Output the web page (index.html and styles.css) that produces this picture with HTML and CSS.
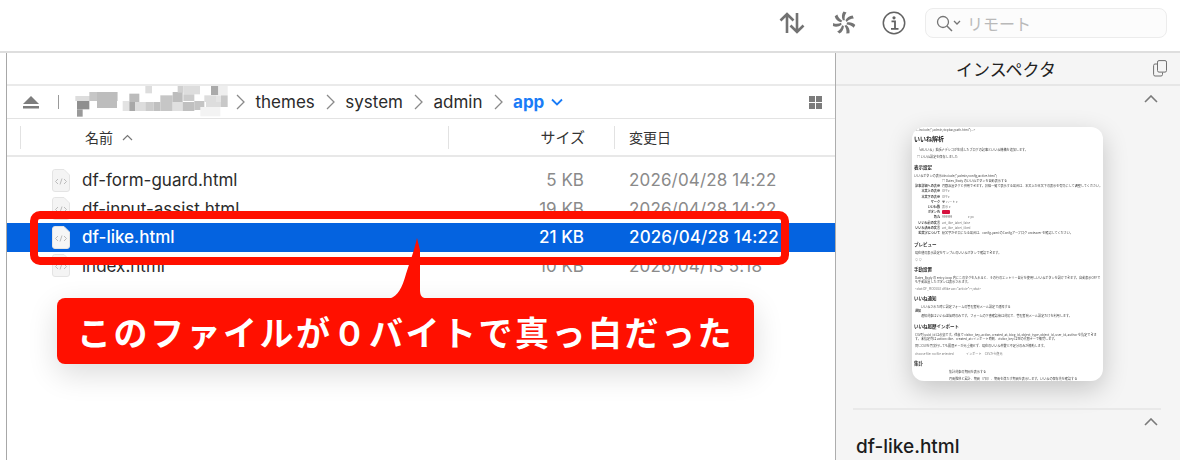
FILE: index.html
```html
<!DOCTYPE html>
<html lang="ja">
<head>
<meta charset="utf-8">
<title>Finder</title>
<link rel="stylesheet" href="styles.css">
</head>
<body>
<div class="window">
  <header class="toolbar">
    <svg class="tool tool-sort" width="26" height="22" viewBox="0 0 26 22"><path d="M8 21V2M1.500 8.500 8 2l6.500 6.500M18 1v19M11.500 13.500 18 20l6.500-6.500" fill="none" stroke="#727272" stroke-width="2.600"/></svg>
    <svg class="tool tool-wheel" width="24" height="24" viewBox="-12 -12 24 24"><g fill="#747474"><path id="b" d="M-1.200-2.800C-2.500-5.500-2.500-9-.5-11.500L2.500-10.500C.8-8.500 .3-5.500 .8-2.800Z"/><use href="#b" transform="rotate(51.400)"/><use href="#b" transform="rotate(102.900)"/><use href="#b" transform="rotate(154.300)"/><use href="#b" transform="rotate(205.700)"/><use href="#b" transform="rotate(257.100)"/><use href="#b" transform="rotate(308.600)"/></g></svg>
    <svg class="tool tool-info" width="24" height="24" viewBox="0 0 24 24"><circle cx="12" cy="12" r="10.700" fill="none" stroke="#636363" stroke-width="1.500"/><circle cx="12" cy="6.800" r="1.600" fill="#636363"/><path d="M9.500 10.300H13v7M9 17.800h7.500" fill="none" stroke="#636363" stroke-width="1.800"/></svg>
    <div class="search">
      <svg width="27" height="17" viewBox="0 0 27 17"><circle cx="7" cy="7" r="5.500" fill="none" stroke="#757575" stroke-width="1.300"/><path d="m11 11 5 5" stroke="#757575" stroke-width="1.500"/><path d="m18 6 3 3 3-3" fill="none" stroke="#757575" stroke-width="1.300"/></svg>
      <span class="search-text">リモート</span>
    </div>
  </header>
  <main class="main">
    <section class="files">
      <div class="files-top"></div>
      <div class="pathbar">
        <svg class="eject" width="16" height="13" viewBox="0 0 16 13"><path d="M8 0 16 8H0Z" fill="#7d7d7d"/><rect y="10" width="16" height="2.500" fill="#7d7d7d"/></svg>
        <span class="path-sep"></span>
        <svg class="mosaic" width="165" height="40" viewBox="0 0 495 120">
          <rect x="13" y="42" width="45" height="15" fill="#ddd"/><rect x="55" y="30" width="85" height="27" fill="#c6c6c6"/><rect x="78" y="30" width="60" height="48" fill="#bdbdbd"/><rect x="18" y="57" width="37" height="25" fill="#8f8f8f"/><rect x="18" y="82" width="17" height="22" fill="#9a9a9a"/><rect x="155" y="57" width="20" height="30" fill="#e3e3e3"/><rect x="175" y="35" width="30" height="25" fill="#bbb"/><rect x="175" y="60" width="18" height="27" fill="#a8a8a8"/><rect x="193" y="60" width="30" height="27" fill="#ddd"/><rect x="223" y="12" width="20" height="22" fill="#ddd"/><rect x="223" y="60" width="25" height="27" fill="#ccc"/><rect x="248" y="60" width="20" height="27" fill="#c0c0c0"/><rect x="268" y="40" width="37" height="47" fill="#c6c6c6"/><rect x="305" y="30" width="30" height="30" fill="#bdbdbd"/><rect x="305" y="60" width="30" height="27" fill="#e0e0e0"/><rect x="320" y="12" width="17" height="20" fill="#d0d0d0"/><rect x="337" y="12" width="50" height="25" fill="#ddd"/><rect x="337" y="37" width="33" height="20" fill="#ccc"/><rect x="335" y="60" width="35" height="27" fill="#c0c0c0"/><rect x="370" y="57" width="30" height="27" fill="#c4c4c4"/><rect x="400" y="40" width="35" height="20" fill="#ddd"/><rect x="420" y="12" width="22" height="27" fill="#aaa"/><rect x="442" y="12" width="28" height="27" fill="#eee"/><rect x="435" y="40" width="15" height="30" fill="#e4e4e4"/><rect x="450" y="40" width="20" height="35" fill="#c8c8c8"/><rect x="388" y="75" width="60" height="28" fill="#f3f3f3"/><rect x="405" y="60" width="45" height="15" fill="#ddd"/>
        </svg>
        <svg class="crumb-arrow" width="9" height="16" viewBox="0 0 9 16"><path d="m1 1 7 7-7 7" fill="none" stroke="#8a8a8a" stroke-width="1.300"/></svg>
        <span class="crumb">themes</span>
        <svg class="crumb-arrow" width="9" height="16" viewBox="0 0 9 16"><path d="m1 1 7 7-7 7" fill="none" stroke="#8a8a8a" stroke-width="1.300"/></svg>
        <span class="crumb">system</span>
        <svg class="crumb-arrow" width="9" height="16" viewBox="0 0 9 16"><path d="m1 1 7 7-7 7" fill="none" stroke="#8a8a8a" stroke-width="1.300"/></svg>
        <span class="crumb">admin</span>
        <svg class="crumb-arrow" width="9" height="16" viewBox="0 0 9 16"><path d="m1 1 7 7-7 7" fill="none" stroke="#8a8a8a" stroke-width="1.300"/></svg>
        <span class="crumb crumb-current">app</span>
        <svg class="crumb-down" width="12" height="8" viewBox="0 0 12 8"><path d="m1 1.500 5 5 5-5" fill="none" stroke="#1a7cf7" stroke-width="1.800"/></svg>
        <svg class="view-grid" width="13" height="13" viewBox="0 0 13 13"><g fill="#7c7c7c"><rect width="6" height="6"/><rect x="7" width="6" height="6"/><rect y="7" width="6" height="6"/><rect x="7" y="7" width="6" height="6"/></g></svg>
      </div>
      <div class="list-head">
        <div class="head-cell head-name">名前<svg width="11" height="7" viewBox="0 0 11 7"><path d="m1 6 4.500-4.500L10 6" fill="none" stroke="#777" stroke-width="1.200"/></svg></div>
        <div class="head-cell head-size">サイズ</div>
        <div class="head-cell head-date">変更日</div>
      </div>
      <div class="rows">
        <div class="row">
          <svg class="doc" width="18" height="23" viewBox="0 0 18 23"><path d="M2.500.5H12L17.500 6V20A2.500 2.500 0 0 1 15 22.500H3A2.500 2.500 0 0 1 .5 20V3A2.500 2.500 0 0 1 2.500.5Z" fill="#f4f4f4" stroke="#e4e4e4"/><path d="m6 10-2.500 2.500L6 15M12 10l2.500 2.500L12 15M10 9.500 8 15.500" fill="none" stroke="#b5b5b5" stroke-width=".9"/></svg>
          <span class="row-name">df-form-guard.html</span><span class="row-size">5 KB</span><span class="row-date">2026/04/28 14:22</span>
        </div>
        <div class="row">
          <svg class="doc" width="18" height="23" viewBox="0 0 18 23"><path d="M2.500.5H12L17.500 6V20A2.500 2.500 0 0 1 15 22.500H3A2.500 2.500 0 0 1 .5 20V3A2.500 2.500 0 0 1 2.500.5Z" fill="#f4f4f4" stroke="#e4e4e4"/><path d="m6 10-2.500 2.500L6 15M12 10l2.500 2.500L12 15M10 9.500 8 15.500" fill="none" stroke="#b5b5b5" stroke-width=".9"/></svg>
          <span class="row-name">df-input-assist.html</span><span class="row-size">19 KB</span><span class="row-date">2026/04/28 14:22</span>
        </div>
        <div class="row row-selected">
          <svg class="doc" width="18" height="23" viewBox="0 0 18 23"><path d="M2.500.5H12L17.500 6V20A2.500 2.500 0 0 1 15 22.500H3A2.500 2.500 0 0 1 .5 20V3A2.500 2.500 0 0 1 2.500.5Z" fill="#f6f6f6" stroke="#e4e4e4"/><path d="m6 10-2.500 2.500L6 15M12 10l2.500 2.500L12 15M10 9.500 8 15.500" fill="none" stroke="#b5b5b5" stroke-width=".9"/></svg>
          <span class="row-name">df-like.html</span><span class="row-size">21 KB</span><span class="row-date">2026/04/28 14:22</span>
        </div>
        <div class="row">
          <svg class="doc" width="18" height="23" viewBox="0 0 18 23"><path d="M2.500.5H12L17.500 6V20A2.500 2.500 0 0 1 15 22.500H3A2.500 2.500 0 0 1 .5 20V3A2.500 2.500 0 0 1 2.500.5Z" fill="#f4f4f4" stroke="#e4e4e4"/><path d="m6 10-2.500 2.500L6 15M12 10l2.500 2.500L12 15M10 9.500 8 15.500" fill="none" stroke="#b5b5b5" stroke-width=".9"/></svg>
          <span class="row-name">index.html</span><span class="row-size">10 KB</span><span class="row-date">2026/04/13 5:18</span>
        </div>
      </div>
    </section>
    <aside class="inspector">
      <div class="insp-head">
        <span class="insp-title">インスペクタ</span>
        <svg class="insp-copy" width="14" height="17" viewBox="0 0 14 17"><rect x="4.500" y=".6" width="9" height="11.500" rx="1.500" fill="none" stroke="#707070"/><path d="M4.500 4H2A1.500 1.500 0 0 0 .6 5.500V14.500A1.500 1.500 0 0 0 2 16H8A1.500 1.500 0 0 0 9.500 14.500V12.500" fill="none" stroke="#707070"/></svg>
      </div>
      <div class="insp-chev-row">
        <svg width="14" height="8" viewBox="0 0 14 8"><path d="m1 7 6-6 6 6" fill="none" stroke="#7a7a7a" stroke-width="1.600"/></svg>
      </div>
      <div class="preview">
        <div class="doc-page">
          <p class="t-code">&lt;!--include("/admin/topbar/path.html")--&gt;</p>
          <h2 class="t-h1">いいね解析</h2>
          <p class="t-lead">「dfいいね」拡張ナデシコが生成したブログの記事といいね機構を追加します。</p>
          <p class="t-p t-gap">□ いいね設定を保存しました</p>
          <h3 class="t-h2">表示設定</h3>
          <div class="t-form">
            <span class="t-label t-plain">いいねボタンの表示</span><span class="t-value">#include("/admin/config/active.html")</span>
            <span class="t-label"></span><span class="t-value">□ Dates_Body のいいねボタンを自動表示する</span>
            <span class="t-label">記事詳細への表示</span><span class="t-value">月数設置タグと併用できます。投稿一覧で表示する場合は、本文上か本文下の表示を有効にして調整してください。</span>
            <span class="t-label">本文上の表示</span><span class="t-value t-muted">OFF ▾</span>
            <span class="t-label">本文下の表示</span><span class="t-value t-muted">OFF ▾</span>
            <span class="t-label">マーク</span><span class="t-value t-muted">♥ ハート ▾</span>
            <span class="t-label">いいね数</span><span class="t-value t-muted">表示 ▾</span>
            <span class="t-label">ボタン色</span><span class="t-swatch"></span>
            <span class="t-label">角丸</span><span class="t-value t-muted">999999　　　　　▾ px</span>
            <span class="t-label">いいね前の文言</span><span class="t-value t-muted">art_like_label_false</span>
            <span class="t-label">いいね済みの文言</span><span class="t-value t-muted">art_like_label_liked</span>
            <span class="t-label">絵文字について</span><span class="t-value">絵文字がゼロになる場合は、config.yaml のConfigアーブログ uroleaver を確認してください。</span>
          </div>
          <h3 class="t-h2">プレビュー</h3>
          <p class="t-p">現在値の表示設定をサンプルのいいねボタンで確認できます。</p>
          <p class="t-p">♡ ♡</p>
          <h3 class="t-h2">手動設置</h3>
          <p class="t-p">Dates_Body の entry-loop 内にこのタグを入れると、その行のエントリー自分を使用しいいねボタンを設けできます。自動表示OFFでも手動設置したボタンは表示されます。</p>
          <p class="t-code-line">&lt;dwt:DF_MODULE dflike var="article"&gt;&lt;/dwt&gt;</p>
          <h3 class="t-h2">いいね通知</h3>
          <p class="t-indent">いいねされた時に設定フォームの管理者宛メール設定で通知する</p>
          <p class="t-tight"><b>通知</b></p>
          <p class="t-indent">通知対象はいいね送信時のみです。フォームの下書確認後は対応で、管理者宛メール設定だけを利用します。</p>
          <h3 class="t-h2 t-h2-far">いいね履歴インポート</h3>
          <p class="t-p">CSV列 uuid_id は必須です。任意で visitor_key, action, created_at, blog_id, object_type, object_id, user_id, author を指定できます。未指定列は action=like、created_at=インポート時刻、visitor_key は空の代替キーで補完します。</p>
          <p class="t-p">同じCSVを再実行しても履歴キーが元重複せず、現在のいいね件数と不足分のみが補勧します。</p>
          <p class="t-code-line">choose file: no file selected　　　　インポート　CSVから復元</p>
          <h3 class="t-h2">集計</h3>
          <p class="t-center">集計対象の期間を表示する</p>
          <p class="t-center t-center-wide">月間推移と累計、期間（7日）、期間を満たす期間を表示します。いいねの保存先を確認する</p>
        </div>
      </div>
      <div class="insp-rule"></div>
      <div class="insp-chev-row insp-chev-row-2">
        <svg width="14" height="8" viewBox="0 0 14 8"><path d="m1 7 6-6 6 6" fill="none" stroke="#7a7a7a" stroke-width="1.600"/></svg>
      </div>
      <div class="insp-name">df-like.html</div>
    </aside>
  </main>

  <div class="mark-frame"></div>
  <div class="callout">
    <svg class="callout-tail" width="38" height="62" viewBox="0 0 38 62"><path d="M27 0C24 14 19 26 16 36 12 50 8 58 0 60.500V62H37V60.500C32 60 30 58 30 52V12Z" fill="#ff1000"/></svg>
    <span class="callout-text">このファイルが&#xFF10;バイトで真っ白だった</span>
  </div>
</div>
</body>
</html>
```

FILE: styles.css
```css
* { box-sizing: border-box; }
html, body { margin: 0; padding: 0; }
body {
  width: 1180px;
  height: 460px;
  overflow: hidden;
  background: #fff;
  color: #1e1e1e;
  font-family: Inter, "Noto Sans CJK JP", sans-serif;
}
.window { position: relative; width: 1180px; height: 460px; overflow: hidden; }

/* toolbar */
.toolbar {
  height: 53px;
  display: flex;
  align-items: center;
  padding: 0 13px 5px 0;
  justify-content: flex-end;
  background: #fff;
  border-bottom: 2px solid #dedede;
}
.tool { flex: none; }
.tool-wheel { margin-left: 27px; }
.tool-info { margin-left: 26px; }
.search {
  width: 242px;
  height: 30px;
  margin-left: 19px;
  display: flex;
  align-items: center;
  padding-left: 10px;
  border: 1px solid #ececec;
  border-radius: 8px;
  background: #fcfcfc;
}
.search-text {
  margin-left: 4px;
  font-size: 16px;
  color: #b9b9b9;
}

/* main split */
.main { display: flex; height: 407px; }
.files {
  width: 830px;
  flex: none;
  margin-left: 6px;
  border-left: 1px solid #a8a8a8;
  border-right: 1px solid #adadad;
  background: #fff;
}
.files-top { height: 33px; border-bottom: 2px solid #eaeaea; }
.pathbar {
  height: 33px;
  display: flex;
  align-items: center;
  border-bottom: 1px solid #e3e3e3;
  padding-left: 16px;
}
.eject { flex: none; }
.path-sep { width: 1px; height: 14px; background: #9a9a9a; margin-left: 19px; }
.mosaic { flex: none; margin-left: 12px; filter: blur(.5px); }
.crumb-arrow { flex: none; }
.crumb { margin: 0 11px 0 10.500px; font-size: 17px; color: #2b2b2b; }
.crumb-current { color: #1a7cf7; font-weight: 700; margin-right: 0; }
.crumb-down { margin-left: 7px; }
.view-grid { margin-left: auto; margin-right: 13px; }

.list-head {
  height: 38px;
  display: grid;
  grid-template-columns: 13px 428px 166px 1fr;
  align-items: center;
  border-bottom: 2px solid #e8e8e8;
  font-size: 14px;
  color: #333;
}
.head-cell { height: 23px; line-height: 23px; border-left: 1px solid #e2e2e2; }
.head-name { padding-left: 64px; grid-column: 1 / 3; margin-left: 13px; }
.head-name svg { margin-left: 9px; vertical-align: 2px; }
.head-size { text-align: right; padding-right: 29px; font-size: 15px; }
.head-date { padding-left: 14px; }

.rows { padding-top: 9px; }
.row {
  height: 28.500px;
  display: grid;
  grid-template-columns: 75px 366px 136px 1fr;
  align-items: center;
  font-size: 17px;
  color: #2b2b2b;
}
.doc { margin-left: 45px; }
.row-size { text-align: right; color: #8a8a8a; }
.row-date { padding-left: 45px; color: #8a8a8a; white-space: nowrap; letter-spacing: .15px; }
.row-selected { background: #0463e0; color: #fff; font-weight: 500; }
.row-selected .row-size, .row-selected .row-date { color: #fff; }

/* inspector */
.inspector { flex: 1; background: #f5f5f5; }
.insp-head {
  height: 33px;
  display: flex;
  align-items: center;
  justify-content: center;
  position: relative;
  border-bottom: 2px solid #e6e6e6;
  font-size: 17px;
  color: #222;
}
.insp-title { margin-right: 4px; }
.insp-copy { position: absolute; right: 13px; top: 7px; }
.insp-chev-row { height: 25px; display: flex; justify-content: flex-end; align-items: center; padding-right: 22px; }
.preview {
  width: 191px;
  height: 254px;
  margin: 16px 0 0 76px;
  border-radius: 12px;
  background: #fff;
  box-shadow: 0 8px 26px rgba(0, 0, 0, .2);
  overflow: hidden;
}
.doc-page {
  height: 254px;
  padding: 1px 2px 0;
  filter: blur(.65px);
  font-size: 3.100px;
  line-height: 4.200px;
  color: #444;
  overflow: hidden;
  font-family: "Noto Sans CJK JP", sans-serif;
}
.doc-page p { margin: 0; }
.doc-page .t-code { color: #555; }
.t-h1 { margin: 3px 0 5px; font-size: 6px; line-height: 8px; color: #222; }
.t-h2 { margin: 3px 0; font-size: 4.500px; line-height: 7px; color: #2a2a2a; }
.t-h2-far { margin-top: 5px; }
.doc-page .t-lead { margin-bottom: 3px; padding-left: 3px; }
.doc-page .t-p { margin-bottom: 3px; padding-left: 1px; }
.doc-page .t-gap { margin-bottom: 4.300px; padding-left: 3px; }
.doc-page .t-tight { padding-left: 1px; }
.doc-page .t-indent { padding-left: 7px; }
.doc-page .t-center { padding-left: 35px; margin-bottom: 3px; white-space: nowrap; }
.doc-page .t-center-wide { padding-left: 35px; }
.doc-page .t-code-line { color: #777; margin: 3.500px 0; padding-left: 1px; }
.t-form {
  display: grid;
  grid-template-columns: 26px 1fr;
  column-gap: 2px;
  row-gap: 1px;
  margin-bottom: 6px;
}
.t-label { height: 4.200px; text-align: right; font-weight: 700; white-space: nowrap; }
.t-plain { font-weight: 400; }
.t-value { height: 4.200px; white-space: nowrap; overflow: hidden; }
.t-muted { color: #777; }
.t-swatch { width: 8px; height: 4px; background: #d6123e; border-radius: 1px; }
.insp-rule { height: 2px; margin: 27px 19px 0 17px; background: #e9e9e9; }
.insp-chev-row-2 { height: 24px; }
.insp-name { margin: 1px 0 0 20px; font-size: 19px; font-weight: 500; line-height: 24px; color: #1c1c1c; }

/* annotation overlay */
.mark-frame {
  position: absolute;
  left: 30px;
  top: 211px;
  width: 759px;
  height: 54px;
  border: 8px solid #ff1000;
  border-radius: 10px;
}
.callout {
  position: absolute;
  left: 57px;
  top: 298px;
  width: 697px;
  height: 66px;
  display: flex;
  align-items: center;
  padding-left: 20px;
  background: #ff1000;
  border-radius: 8px;
  box-shadow: 0 10px 30px rgba(0, 0, 0, .14);
}
.callout-tail { position: absolute; left: 333px; top: -60px; }
.callout-text {
  color: #fff;
  font-size: 34px;
  font-weight: 700;
  letter-spacing: 2.500px;
  white-space: nowrap;
  font-family: "Noto Sans CJK JP", sans-serif;
}
```
